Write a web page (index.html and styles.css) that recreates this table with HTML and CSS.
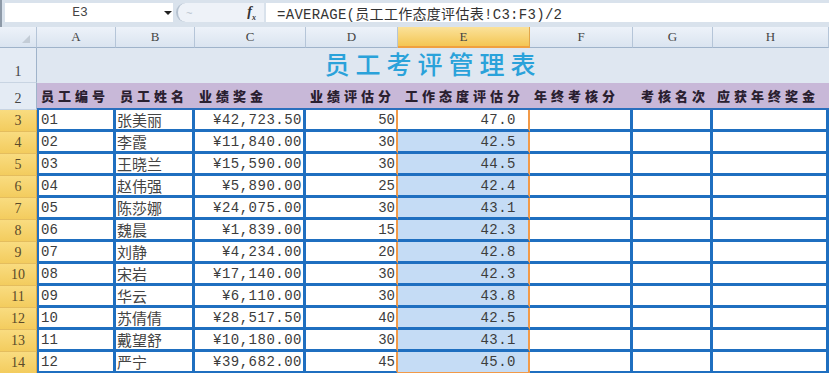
FILE: index.html
```html
<!DOCTYPE html>
<html lang="zh-CN">
<head>
<meta charset="utf-8">
<title>员工考评管理表</title>
<link rel="stylesheet" href="styles.css">
</head>
<body>
<div class="app">
  <div class="fbar">
    <div class="namebox"><span class="ref">E3</span><span class="dd"></span></div>
    <div class="fxzone">
      <span class="groove"></span>
      <span class="cancel">~</span>
      <span class="fx">f<sub>x</sub></span>
    </div>
    <div class="formula">=AVERAGE(员工工作态度评估表!C3:F3)/2</div>
  </div>

  <div class="sheet">
    <div class="ch corner"><span class="tri"></span></div>
    <div class="ch">A</div><div class="ch">B</div><div class="ch">C</div><div class="ch">D</div>
    <div class="ch ch-act">E</div><div class="ch">F</div><div class="ch">G</div><div class="ch">H</div>

    <div class="rh rh-tall">1</div>
    <div class="title">员工考评管理表</div>

    <div class="rh rh-hd">2</div>
    <div class="hd">员工编号</div>
    <div class="hd">员工姓名</div>
    <div class="hd">业绩奖金</div>
    <div class="hd">业绩评估分</div>
    <div class="hd hd-e">工作态度评估分</div>
    <div class="hd">年终考核分</div>
    <div class="hd hd-g">考核名次</div>
    <div class="hd">应获年终奖金</div>

    <div class="rh rh-sel">3</div><div class="c c-a">01</div><div class="c c-b">张美丽</div><div class="c c-num">¥42,723.50</div><div class="c c-d">50</div><div class="c c-e c-active">47.0</div><div class="c"></div><div class="c"></div><div class="c"></div>
    <div class="rh rh-sel">4</div><div class="c c-a">02</div><div class="c c-b">李霞</div><div class="c c-num">¥11,840.00</div><div class="c c-d">30</div><div class="c c-e">42.5</div><div class="c"></div><div class="c"></div><div class="c"></div>
    <div class="rh rh-sel">5</div><div class="c c-a">03</div><div class="c c-b">王晓兰</div><div class="c c-num">¥15,590.00</div><div class="c c-d">30</div><div class="c c-e">44.5</div><div class="c"></div><div class="c"></div><div class="c"></div>
    <div class="rh rh-sel">6</div><div class="c c-a">04</div><div class="c c-b">赵伟强</div><div class="c c-num">¥5,890.00</div><div class="c c-d">25</div><div class="c c-e">42.4</div><div class="c"></div><div class="c"></div><div class="c"></div>
    <div class="rh rh-sel">7</div><div class="c c-a">05</div><div class="c c-b">陈莎娜</div><div class="c c-num">¥24,075.00</div><div class="c c-d">30</div><div class="c c-e">43.1</div><div class="c"></div><div class="c"></div><div class="c"></div>
    <div class="rh rh-sel">8</div><div class="c c-a">06</div><div class="c c-b">魏晨</div><div class="c c-num">¥1,839.00</div><div class="c c-d">15</div><div class="c c-e">42.3</div><div class="c"></div><div class="c"></div><div class="c"></div>
    <div class="rh rh-sel">9</div><div class="c c-a">07</div><div class="c c-b">刘静</div><div class="c c-num">¥4,234.00</div><div class="c c-d">20</div><div class="c c-e">42.8</div><div class="c"></div><div class="c"></div><div class="c"></div>
    <div class="rh rh-sel">10</div><div class="c c-a">08</div><div class="c c-b">宋岩</div><div class="c c-num">¥17,140.00</div><div class="c c-d">30</div><div class="c c-e">42.3</div><div class="c"></div><div class="c"></div><div class="c"></div>
    <div class="rh rh-sel">11</div><div class="c c-a">09</div><div class="c c-b">华云</div><div class="c c-num">¥6,110.00</div><div class="c c-d">30</div><div class="c c-e">43.8</div><div class="c"></div><div class="c"></div><div class="c"></div>
    <div class="rh rh-sel">12</div><div class="c c-a">10</div><div class="c c-b">苏倩倩</div><div class="c c-num">¥28,517.50</div><div class="c c-d">40</div><div class="c c-e">42.5</div><div class="c"></div><div class="c"></div><div class="c"></div>
    <div class="rh rh-sel">13</div><div class="c c-a">11</div><div class="c c-b">戴望舒</div><div class="c c-num">¥10,180.00</div><div class="c c-d">30</div><div class="c c-e">43.1</div><div class="c"></div><div class="c"></div><div class="c"></div>
    <div class="rh rh-sel">14</div><div class="c c-a">12</div><div class="c c-b">严宁</div><div class="c c-num">¥39,682.00</div><div class="c c-d">45</div><div class="c c-e c-last">45.0</div><div class="c"></div><div class="c"></div><div class="c"></div>
  </div>
</div>
</body>
</html>
```

FILE: styles.css
```css
* { box-sizing: border-box; margin: 0; padding: 0; }

html, body {
  width: 829px;
  height: 373px;
  overflow: hidden;
  background: #ffffff;
}

body {
  font-family: "Liberation Mono", "Noto Sans CJK SC", monospace;
  color: #333;
}

.app { width: 829px; }

/* ---------- formula bar ---------- */
.fbar {
  display: flex;
  height: 27px;
  padding: 3px 0 5px 3px;
  background: #d9e2ec;
  border-left: 2px solid #8e9aa8;
}

.namebox {
  width: 168px;
  background: #fff;
  display: flex;
  align-items: center;
}

.ref {
  width: 150px;
  text-align: center;
  font-family: "Liberation Mono", monospace;
  font-size: 13px;
  color: #444;
}

.dd {
  width: 0;
  height: 0;
  margin-left: 9px;
  border-left: 4px solid transparent;
  border-right: 4px solid transparent;
  border-top: 4px solid #222;
}

.fxzone {
  width: 88px;
  display: flex;
  align-items: center;
  background: #eef2f8;
  border-radius: 10px 0 0 10px;
  border-left: 2px solid #b6c2d0;
  margin-left: 3px;
}

.groove { width: 2px; }

.cancel {
  margin-left: 6px;
  font-size: 11px;
  color: #b8c2cd;
  font-family: "Liberation Sans", sans-serif;
}

.fx {
  margin-left: auto;
  margin-right: 8px;
  font-family: "Liberation Serif", serif;
  font-style: italic;
  font-weight: bold;
  font-size: 14px;
  color: #333;
}
.fx sub { font-size: 8px; }

.formula {
  flex: 1;
  background: #fff;
  margin-left: 2px;
  padding-left: 11px;
  display: flex;
  align-items: center;
  font-size: 14px;
  letter-spacing: 0.3px;
  color: #333;
  white-space: nowrap;
}

/* ---------- sheet grid ---------- */
.sheet {
  display: grid;
  grid-template-columns: 37px 79px 79px 111px 92px 132px 103px 80px 116px;
  grid-template-rows: 21px 35px 27px repeat(12, 22px);
}

.ch {
  display: flex;
  align-items: center;
  justify-content: center;
  background: linear-gradient(#edf2f9, #dae4f0);
  border-right: 1px solid #b5c5d8;
  border-bottom: 1px solid #9fb3ca;
  font-family: "Liberation Serif", serif;
  font-size: 13px;
  color: #444;
}

.corner { justify-content: flex-end; align-items: flex-end; padding: 0 6px 4px 0; }
.tri {
  width: 0;
  height: 0;
  border-left: 8px solid transparent;
  border-bottom: 8px solid #c3ccd6;
}

.ch-act {
  background: linear-gradient(#fbe29a, #f4c654);
  border-right-color: #e2a64a;
  border-bottom: 2px solid #f0a040;
}

.rh {
  display: flex;
  align-items: flex-end;
  justify-content: center;
  padding-bottom: 2px;
  background: #e4ebf4;
  border-right: 1px solid #9fb3ca;
  border-bottom: 1px solid #c8d4e2;
  font-family: "Liberation Serif", serif;
  font-size: 14px;
  color: #444;
}

.rh-sel {
  background: linear-gradient(#f9dc80, #f3cc5e);
  border-right: 1px solid #e2ad48;
  border-bottom: 1px solid #e4bd5e;
  color: #5a4a2a;
}

.title {
  grid-column: 2 / span 8;
  display: flex;
  align-items: flex-end;
  justify-content: center;
  padding-bottom: 2px;
  background: #dfe7f1;
  font-family: "Noto Sans CJK SC", sans-serif;
  font-weight: 500;
  font-size: 25px;
  letter-spacing: 6px;
  color: #2aa2da;
}

.hd {
  display: flex;
  align-items: center;
  padding-left: 4px;
  background: #c8b8d8;
  border-bottom: 2px solid #2a6fbd;
  font-family: "Noto Sans CJK SC", sans-serif;
  font-weight: 900;
  font-size: 13px;
  letter-spacing: 4px;
  color: #2a2030;
  white-space: nowrap;
}
.hd-e { padding-left: 7px; }
.hd-g { padding-left: 8px; }

/* data cells */
.c {
  display: flex;
  align-items: center;
  background: #fff;
  border-right: 3px solid #1f6fc0;
  border-bottom: 3px solid #1f6fc0;
  font-size: 14px;
  color: #3c3c3c;
  white-space: nowrap;
}

.c-a { border-left: 2px solid #1f6fc0; padding-left: 2px; }

.c-b {
  padding-left: 1px;
  font-family: "Noto Sans CJK SC", sans-serif;
  font-size: 15px;
  color: #444;
}

.c-num {
  justify-content: flex-end;
  padding-right: 1px;
  letter-spacing: 0.5px;
}

.c-d {
  justify-content: flex-end;
  padding-right: 1px;
  border-right: 2px solid #f29a48;
}

.c-e {
  justify-content: flex-end;
  padding-right: 12px;
  background: #c5dcf5;
  border-right: 2px solid #f29a48;
  letter-spacing: 0.5px;
}
.c-active { background: #fff; }
.c-last { border-bottom: 2px solid #f29a48; }
```
